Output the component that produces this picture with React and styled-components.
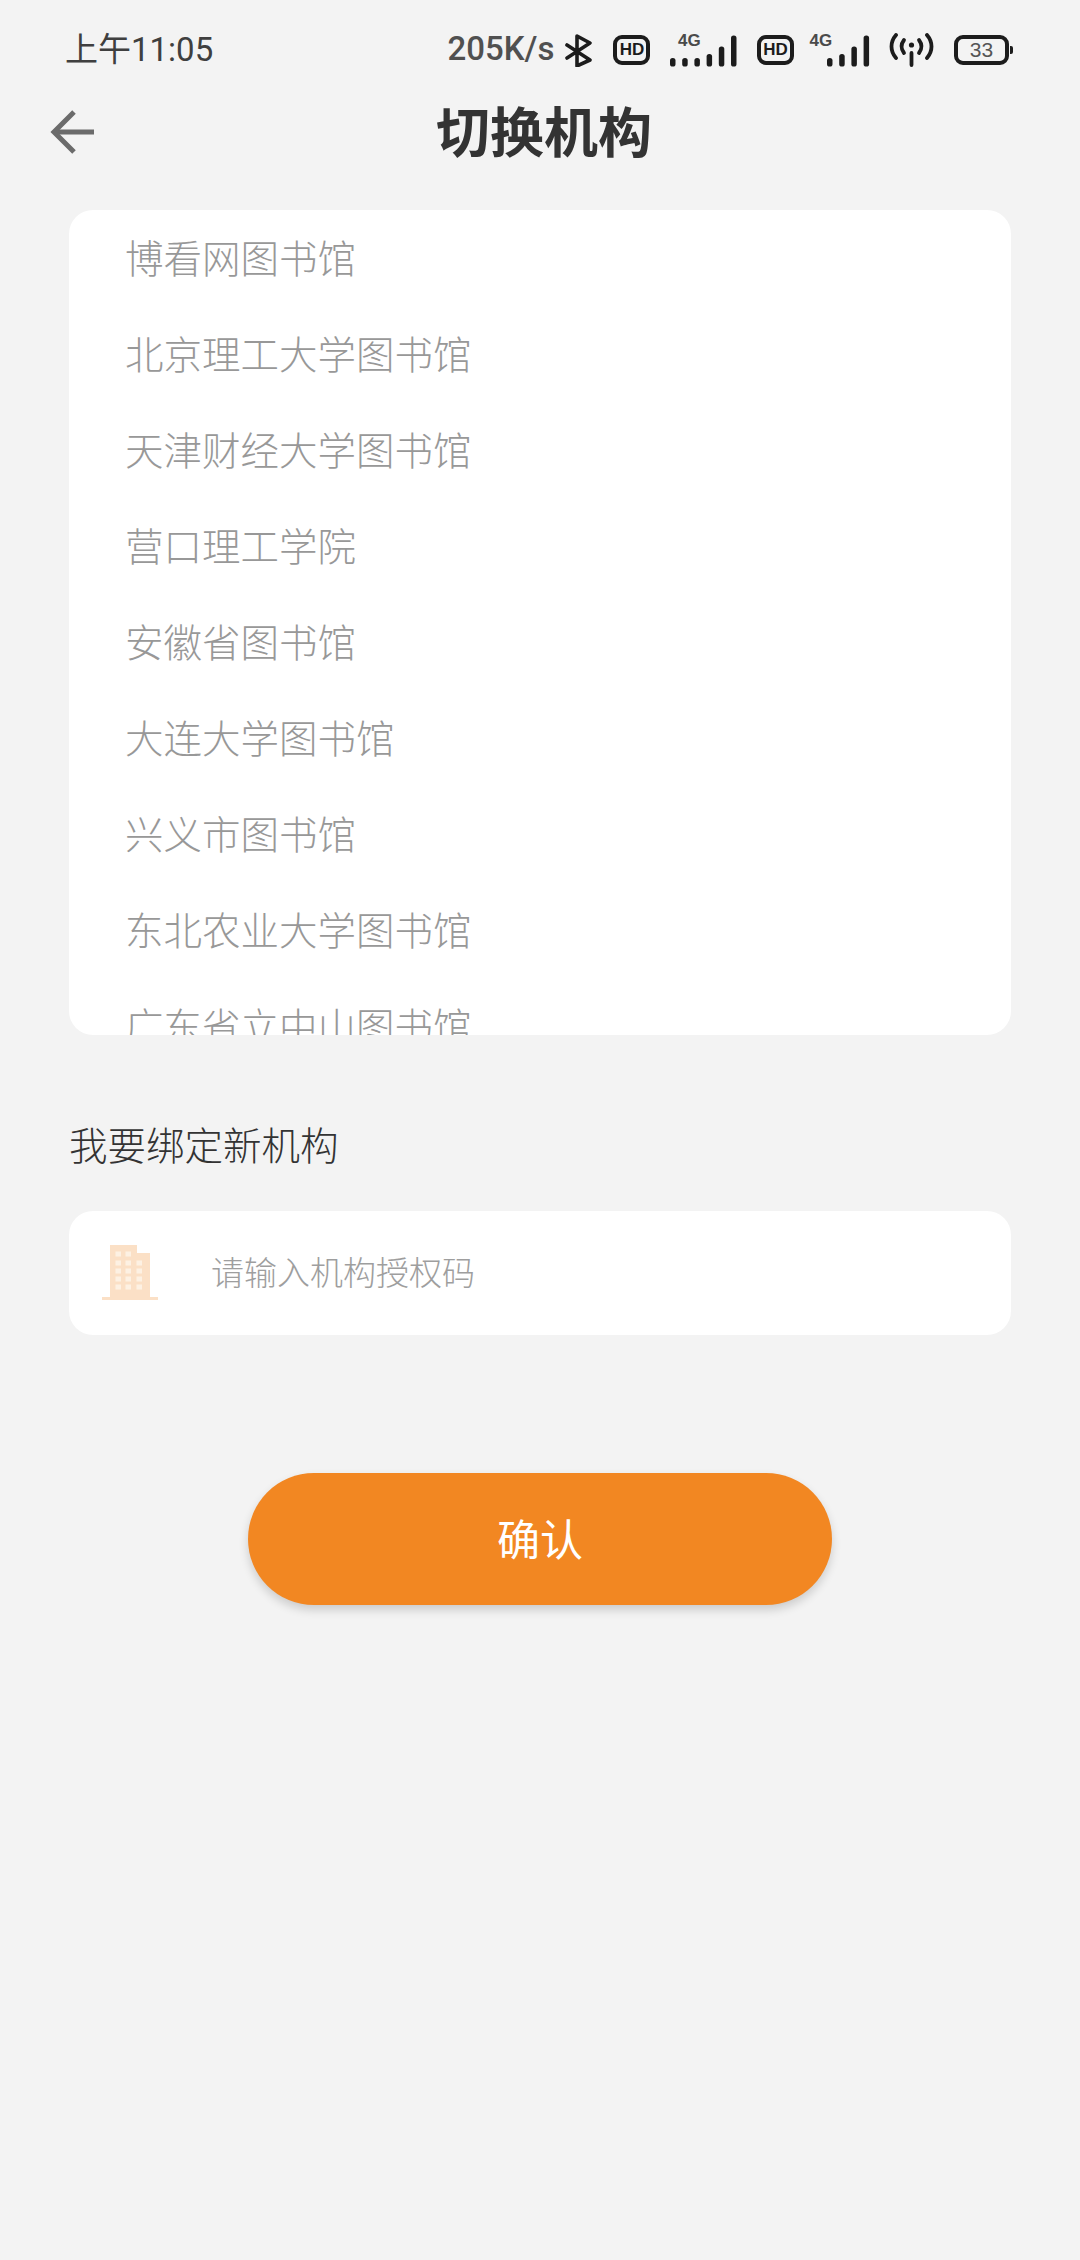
import React from 'react';
import styled, { createGlobalStyle } from 'styled-components';

const institutions = [
  '博看网图书馆',
  '北京理工大学图书馆',
  '天津财经大学图书馆',
  '营口理工学院',
  '安徽省图书馆',
  '大连大学图书馆',
  '兴义市图书馆',
  '东北农业大学图书馆',
  '广东省立中山图书馆',
];

const Bluetooth = () => (
  <BluetoothSvg width="27" height="33" viewBox="0 0 27 33" fill="none" stroke="#1c1c1c" strokeWidth="3.6" strokeLinecap="round" strokeLinejoin="round">
    <path d="M2 11 25 26 12 32V2L25 9 2 24" />
  </BluetoothSvg>
);

const SignalBars = ({ bars, label, labelX }) => {
  const width = (bars.length - 1) * 12.2 + 5.5;
  return (
    <SignalSvg width={width} height="34" viewBox={`0 0 ${width} 34`}>
      {bars.map((h, i) => (
        <rect key={i} x={i * 12.2} y={33.5 - h} width="5.5" height={h} rx="2.6" fill="#1c1c1c" />
      ))}
      <SmallLabel x={labelX} y="12.8">{label}</SmallLabel>
    </SignalSvg>
  );
};

const Hotspot = () => (
  <svg width="45" height="34" viewBox="0 0 45 34" fill="none" stroke="#1c1c1c" strokeWidth="3.8" strokeLinecap="round">
    <path d="M7 2C1 9 1 18 7 25" />
    <path d="M38 2C44 9 44 18 38 25" />
    <path d="M15 7C12 11 12 16 15 20" />
    <path d="M30 7C33 11 33 16 30 20" />
    <circle cx="22.5" cy="12" r="2.6" fill="#1c1c1c" stroke="none" />
    <path d="M22.5 20V32" />
  </svg>
);

const Building = () => (
  <svg width="56" height="56" viewBox="0 0 56 56">
    <path d="M8 0H35V8H48V52H56V55H0V52H8Z" fill="#fbe0c6" />
    {[9, 18, 26, 34, 42].map((y) =>
      [16, 26, 37].map((x) =>
        x === 37 && y === 9 ? null : <rect key={`${x}-${y}`} x={x - 2.5} y={y - 2.5} width="5.5" height="5" fill="#fdf1e3" />
      )
    )}
  </svg>
);

const BackArrow = () => (
  <svg width="44" height="44" viewBox="0 0 44 44" fill="none" stroke="#6b6b6b" strokeWidth="5">
    <path d="M44 22H4" />
    <path d="M24 2 4 22 24 42" />
  </svg>
);

const App = () => {
  return (
    <Page>
      <GlobalStyle />
      <StatusBar>
        <Clock>上午11:05</Clock>
        <StatusIcons>
          <Speed>205K/s</Speed>
          <Bluetooth />
          <HdBadge>HD</HdBadge>
          <SignalBars bars={[8.5, 8.5, 8.5, 12.5, 20, 31]} label="4G" labelX="8" />
          <HdBadge>HD</HdBadge>
          <SignalGroup>
            <SignalBars bars={[8.5, 12.5, 20, 31]} label="4G" labelX="-17.5" />
          </SignalGroup>
          <Hotspot />
          <Battery>
            <BatteryBody>33</BatteryBody>
            <BatteryTip />
          </Battery>
        </StatusIcons>
      </StatusBar>

      <Header>
        <BackButton>
          <BackArrow />
        </BackButton>
        <Title>切换机构</Title>
      </Header>

      <ListCard>
        {institutions.map((name) => (
          <ListRow key={name}>{name}</ListRow>
        ))}
      </ListCard>

      <SectionLabel>我要绑定新机构</SectionLabel>

      <InputCard>
        <Building />
        <CodeInput placeholder="请输入机构授权码" />
      </InputCard>

      <ConfirmButton>确认</ConfirmButton>
    </Page>
  );
};

export default App;

const cjk = `"Noto Sans CJK SC", "Noto Sans", sans-serif`;

const GlobalStyle = createGlobalStyle`
  html, body {
    margin: 0;
    background: #f3f3f3;
  }
`;

const Page = styled.div`
  width: 1080px;
  height: 2260px;
  background: #f3f3f3;
  font-family: ${cjk};
  overflow: hidden;
`;

const StatusBar = styled.div`
  height: 68px;
  padding: 16px 67px 0 65px;
  display: flex;
  align-items: center;
  justify-content: space-between;
`;

const Clock = styled.div`
  font-family: Roboto, ${cjk};
  font-size: 33px;
  color: #3f3f3f;
  margin-bottom: 6px;
`;

const StatusIcons = styled.div`
  display: flex;
  align-items: center;
  gap: 20px;
`;

const Speed = styled.div`
  font-family: Roboto, sans-serif;
  font-size: 33px;
  font-weight: 500;
  color: #505050;
  margin-right: -9px;
  margin-bottom: 3px;
`;

const BluetoothSvg = styled.svg`
  margin-right: 1px;
`;

const HdBadge = styled.div`
  box-sizing: border-box;
  width: 37px;
  height: 30px;
  border: 4px solid #1c1c1c;
  border-radius: 9px;
  display: flex;
  align-items: center;
  justify-content: center;
  font-family: "Liberation Sans", sans-serif;
  font-size: 17px;
  font-weight: 700;
  color: #1c1c1c;
`;

const SignalSvg = styled.svg`
  overflow: visible;
`;

const SmallLabel = styled.text`
  font-family: "Liberation Sans", sans-serif;
  font-size: 17px;
  font-weight: 700;
  fill: #4a4a4a;
`;

const SignalGroup = styled.div`
  display: flex;
  margin-left: 13px;
`;

const Battery = styled.div`
  display: flex;
  align-items: center;
  gap: 1px;
`;

const BatteryBody = styled.div`
  box-sizing: border-box;
  width: 55px;
  height: 30px;
  border: 4px solid #1c1c1c;
  border-radius: 9px;
  display: flex;
  align-items: center;
  justify-content: center;
  font-family: "Liberation Sans", sans-serif;
  font-size: 21px;
  color: #555;
`;

const BatteryTip = styled.div`
  width: 3px;
  height: 8px;
  background: #1c1c1c;
  border-radius: 0 2px 2px 0;
`;

const Header = styled.div`
  height: 98px;
  padding-left: 50px;
  display: flex;
  align-items: center;
  gap: 342px;
`;

const BackButton = styled.div`
  display: flex;
  width: 44px;
  margin-bottom: 3px;
`;

const Title = styled.h1`
  margin: 0 0 8px;
  font-size: 54px;
  font-weight: 700;
  color: #333;
  white-space: nowrap;
`;

const ListCard = styled.div`
  margin: 28px 69px 0;
  height: 825px;
  background: #fff;
  border-radius: 24px;
  overflow: hidden;
`;

const ListRow = styled.div`
  box-sizing: border-box;
  height: 96px;
  padding: 0 0 4px 56px;
  display: flex;
  align-items: center;
  font-size: 38.5px;
  font-weight: 300;
  color: #989898;
`;

const SectionLabel = styled.div`
  margin: 83px 0 43px 69px;
  height: 50px;
  line-height: 50px;
  font-size: 38.5px;
  font-weight: 300;
  color: #333;
`;

const InputCard = styled.div`
  margin: 0 69px;
  height: 124px;
  padding-left: 33px;
  background: #fff;
  border-radius: 24px;
  display: flex;
  align-items: center;
  gap: 53px;
`;

const CodeInput = styled.input`
  flex: 1;
  min-width: 0;
  border: none;
  outline: none;
  background: transparent;
  padding: 0 0 5px;
  font-family: ${cjk};
  font-size: 33px;
  font-weight: 300;
  color: #333;

  &::placeholder {
    color: #9e9e9e;
    opacity: 1;
  }
`;

const ConfirmButton = styled.button`
  display: block;
  width: 584px;
  height: 132px;
  margin: 138px auto 0;
  padding: 0 0 5px;
  border: none;
  border-radius: 66px;
  background: #f28722;
  box-shadow: 0 5px 10px rgba(0, 0, 0, 0.16);
  font-family: ${cjk};
  font-size: 43px;
  color: #fff;
`;
